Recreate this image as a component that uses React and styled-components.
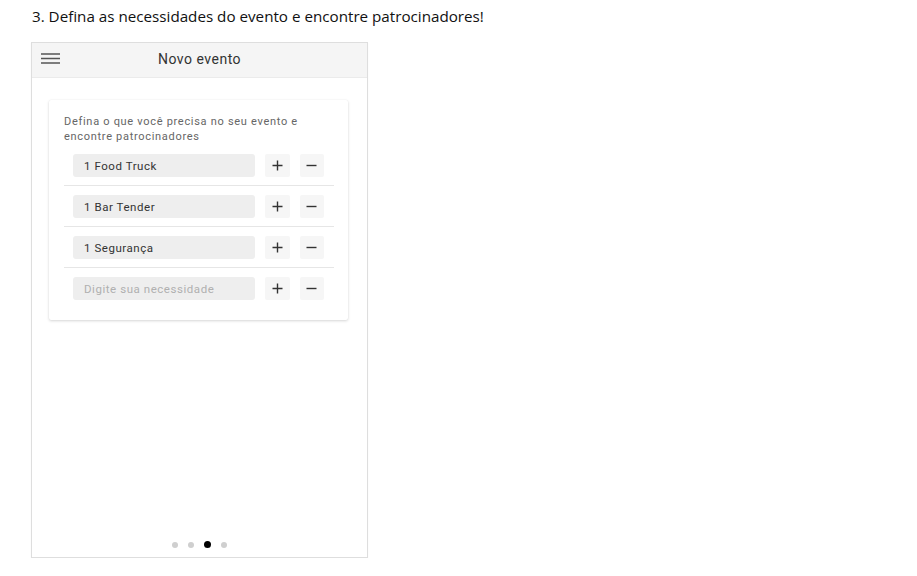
import React from "react";
import styled, { createGlobalStyle } from "styled-components";

const Global = createGlobalStyle`
  html, body { margin: 0; padding: 0; background: #fff; }
  body { font-family: "Open Sans", "Noto Sans", sans-serif; }
`;

const Page = styled.div`
  padding: 6px 0 0 31px;
`;

const Heading = styled.h1`
  margin: 0 0 15px 1px;
  font-family: "Open Sans", "Noto Sans", sans-serif;
  font-weight: 400;
  font-size: 15.2px;
  line-height: 21px;
  color: #111;
`;

const Phone = styled.div`
  width: 335px;
  height: 514px;
  border: 1px solid #dedede;
  box-shadow: 0 1px 1px rgba(0,0,0,0.06);
  display: flex;
  flex-direction: column;
  font-family: Roboto, "Liberation Sans", sans-serif;
  background: #fff;
`;

const TopBar = styled.div`
  height: 34px;
  background: #f5f5f5;
  border-bottom: 1px solid #ebebeb;
  display: flex;
  align-items: center;
  position: relative;
`;

const Burger = styled.svg`
  margin-left: 9px;
  margin-top: -2px;
  width: 19px;
  height: 12px;
`;

const BarTitle = styled.div`
  position: absolute;
  left: 0;
  right: 0;
  top: 8px;
  text-align: center;
  font-size: 14px;
  letter-spacing: 0.5px;
  color: #333;
  pointer-events: none;
`;

const Body = styled.div`
  flex: 1;
  display: flex;
  flex-direction: column;
  padding: 22px 19px 0 17px;
`;

const Card = styled.div`
  background: #fff;
  border-radius: 2px;
  box-shadow: 0 1px 3px rgba(0,0,0,0.16), 0 0 1px rgba(0,0,0,0.08);
  padding: 14px 14px 12px 15px;
`;

const Intro = styled.p`
  margin: 0 0 10px;
  font-size: 11px;
  letter-spacing: 0.7px;
  line-height: 15px;
  color: #666;
  width: 262px;
`;

const Row = styled.div`
  display: flex;
  align-items: center;
  gap: 10px;
  padding: 9px 10px 8px 9px;
  border-bottom: ${p => (p.$last ? "none" : "1px solid #e6e6e6")};
  &:first-of-type { padding-top: 0; }
`;

const Field = styled.div`
  flex: 0 0 182px;
  height: 23px;
  box-sizing: border-box;
  border-radius: 3px;
  background: #eeeeee;
  padding-left: 11px;
  display: flex;
  align-items: center;
  font-size: 11.5px;
  letter-spacing: 0.55px;
  color: ${p => (p.$placeholder ? "#b0b0b0" : "#333")};
`;

const IconBtn = styled.div`
  width: 25px;
  height: 23px;
  border-radius: 2px;
  background: #f6f6f6;
  display: flex;
  align-items: center;
  justify-content: center;
`;

const Spacer = styled.div`
  flex: 1;
`;

const Dots = styled.div`
  display: flex;
  justify-content: center;
  align-items: center;
  gap: 10px;
  padding-bottom: 9px;
  padding-left: 2px;
`;

const Dot = styled.span`
  width: ${p => (p.$active ? 7 : 6)}px;
  height: ${p => (p.$active ? 7 : 6)}px;
  border-radius: 50%;
  background: ${p => (p.$active ? "#000" : "#cfcfcf")};
`;

const Plus = () => (
  <svg width="11" height="11" viewBox="0 0 11 11">
    <path d="M5.5 0.5v10M0.5 5.5h10" stroke="#333" strokeWidth="1.4" />
  </svg>
);

const Minus = () => (
  <svg width="11" height="11" viewBox="0 0 11 11">
    <path d="M0.5 5.5h10" stroke="#333" strokeWidth="1.4" />
  </svg>
);

const items = [
  { text: "1 Food Truck" },
  { text: "1 Bar Tender" },
  { text: "1 Segurança" },
  { text: "Digite sua necessidade", placeholder: true },
];

export default function App() {
  return (
    <Page>
      <Global />
      <Heading>3. Defina as necessidades do evento e encontre patrocinadores!</Heading>
      <Phone>
        <TopBar>
          <Burger viewBox="0 0 19 12">
            <path d="M0 1h19M0 5.5h19M0 10h19" stroke="#555" strokeWidth="1.5" />
          </Burger>
          <BarTitle>Novo evento</BarTitle>
        </TopBar>
        <Body>
          <Card>
            <Intro>Defina o que você precisa no seu evento e encontre patrocinadores</Intro>
            {items.map((it, i) => (
              <Row key={i} $last={i === items.length - 1}>
                <Field $placeholder={it.placeholder}>{it.text}</Field>
                <IconBtn><Plus /></IconBtn>
                <IconBtn><Minus /></IconBtn>
              </Row>
            ))}
          </Card>
          <Spacer />
          <Dots>
            <Dot />
            <Dot />
            <Dot $active />
            <Dot />
          </Dots>
        </Body>
      </Phone>
    </Page>
  );
}
